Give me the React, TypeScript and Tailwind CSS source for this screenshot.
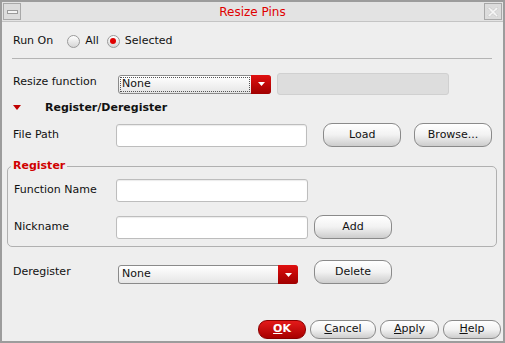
import React from 'react';

const font = { fontFamily: '"DejaVu Sans", Verdana, sans-serif' };

const Radio: React.FC<{ checked?: boolean; label: string }> = ({ checked, label }) => (
  <label className="flex items-center gap-[5px]">
    <span className="w-[13px] h-[13px] rounded-full border border-[#9a9a9a] bg-linear-to-b from-white to-[#d6d6d6] flex items-center justify-center">
      {checked && <span className="w-[6px] h-[6px] rounded-full bg-[#e00000]" />}
    </span>
    <span>{label}</span>
  </label>
);

const Btn: React.FC<{ className?: string; children: React.ReactNode }> = ({ className = '', children }) => (
  <button className={`h-[24px] rounded-[9px] border border-[#8a8a8a] bg-linear-to-b from-white via-[#f2f2f2] to-[#cdcdcd] text-[#111] flex items-center justify-center ${className}`}>
    {children}
  </button>
);

const Input: React.FC<{ className?: string }> = ({ className = '' }) => (
  <div className={`h-[23px] w-[192px] rounded-[3px] border border-[#bdbdbd] bg-white shadow-[inset_0_1px_1px_rgba(0,0,0,0.08)] ${className}`} />
);

const Dropdown: React.FC<{ width: string; focus?: boolean }> = ({ width, focus }) => (
  <div className={`${width} h-[19px] ml-[2px] flex rounded-[3px] border border-[#8a8a8a] bg-linear-to-b from-white to-[#e6e6e6]`}>
    <div className="flex-1 flex items-center p-[1px]">
      <div className={`w-full h-full flex items-center pl-[1px] ${focus ? 'border border-dotted border-[#555]' : 'border border-transparent'}`}>
        None
      </div>
    </div>
    <div className="w-[20px] -my-[1px] -mr-[1px] rounded-r-[3px] bg-linear-to-b from-[#e01010] to-[#a00000] flex items-center justify-center">
      <svg width="7" height="4" viewBox="0 0 7 4"><path d="M0 0h7L3.5 4z" fill="#fff" /></svg>
    </div>
  </div>
);

export default function App() {
  return (
    <div style={font} className="w-[505px] h-[343px] border-2 border-[#9c9c9c] bg-[#eeeeee] text-[11px] text-[#111] flex flex-col">
      {/* Title bar */}
      <div className="h-[20px] flex items-center bg-[#e3e3e3] border-b border-[#c4c4c4] px-[1px]">
        <div className="w-[18px] h-[17px] border border-[#a8a8a8] bg-[#dcdcdc] flex items-center justify-center">
          <div className="w-[11px] h-[4px] border border-[#9a9a9a] bg-[#f4f4f4]" />
        </div>
        <div className="flex-1 text-center text-[#e00000] text-[12px]">Resize Pins</div>
        <div className="w-[18px] h-[17px] border border-[#a8a8a8] bg-[#dcdcdc] flex items-center justify-center">
          <svg width="12" height="12" viewBox="0 0 12 12">
            <path d="M1 2.5L2.5 1L6 4.5L9.5 1L11 2.5L7.5 6L11 9.5L9.5 11L6 7.5L2.5 11L1 9.5L4.5 6Z" fill="#f6f6f6" stroke="#b4b4b4" strokeWidth="0.8" strokeDasharray="1 1" />
          </svg>
        </div>
      </div>

      {/* Body */}
      <div className="flex-1 flex flex-col pl-[10px] pr-[11px]">
        <div className="h-[20px] mt-[9px] flex items-center gap-[14px]">
          <span className="ml-[1px]">Run On</span>
          <div className="flex items-center gap-[8px]">
            <Radio label="All" />
            <Radio checked label="Selected" />
          </div>
        </div>

        <div className="mt-[7px] h-[1px] bg-[#b4b4b4]" />

        <div className="mt-[14px] h-[22px] flex items-center">
          <span className="w-[104px] -mt-[4px] pl-[1px]">Resize function</span>
          <Dropdown width="w-[153px]" focus />
          <div className="ml-[6px] w-[172px] h-[22px] rounded-[3px] border border-[#d0d0d0] bg-[#dddddd]" />
        </div>

        <div className="mt-[5px] h-[16px] flex items-center">
          <svg width="8" height="5" viewBox="0 0 8 5" className="ml-[1px] -mt-[2px]"><path d="M0 0h8L4 5z" fill="#c00000" /></svg>
          <span className="ml-[24px] font-bold">Register/Deregister</span>
        </div>

        <div className="mt-[7px] h-[24px] flex items-center">
          <span className="w-[104px] pl-[1px]">File Path</span>
          <Input />
          <Btn className="ml-[16px] w-[78px]">Load</Btn>
          <Btn className="ml-[13px] w-[78px]">Browse...</Btn>
        </div>

        <div className="relative mt-[19px] -ml-[5px] -mr-[5px] border border-[#b0b0b0] rounded-[5px] pl-[5px] pt-[12px] pb-[7px]">
          <span className="absolute -top-[9px] left-[3px] px-[2px] bg-[#eeeeee] text-[#d00000] font-bold">Register</span>
          <div className="h-[23px] flex items-center">
            <span className="w-[103px] pl-[1px]">Function Name</span>
            <Input />
          </div>
          <div className="mt-[13px] h-[24px] flex items-center">
            <span className="w-[103px] pl-[1px]">Nickname</span>
            <Input />
            <Btn className="ml-[6px] w-[78px]">Add</Btn>
          </div>
        </div>

        <div className="mt-[13px] h-[24px] flex items-center">
          <span className="w-[104px] pl-[1px]">Deregister</span>
          <div className="mt-[5px]">
            <Dropdown width="w-[180px]" />
          </div>
          <Btn className="ml-[16px] w-[78px]">Delete</Btn>
        </div>

        <div className="mt-auto mb-[2px] -mr-[9px] flex justify-end gap-[4px]">
          <button className="h-[19px] w-[48px] rounded-[9px] border border-[#8a0000] bg-linear-to-b from-[#e41a1a] to-[#a80000] text-white font-bold">
            <span className="underline">O</span>K
          </button>
          <Btn className="!h-[19px] w-[66px]"><span className="underline">C</span>ancel</Btn>
          <Btn className="!h-[19px] w-[59px]"><span className="underline">A</span>pply</Btn>
          <Btn className="!h-[19px] w-[58px]"><span className="underline">H</span>elp</Btn>
        </div>
      </div>
    </div>
  );
}
